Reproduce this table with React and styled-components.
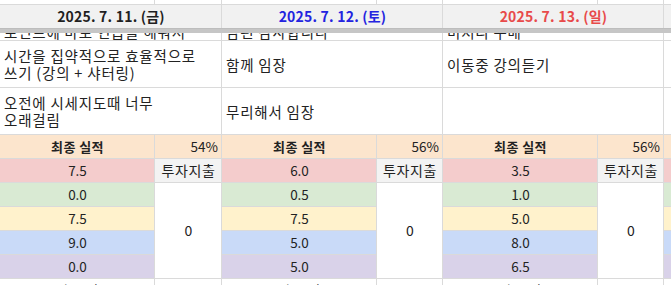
import React from "react";
import styled, { createGlobalStyle } from "styled-components";

const Global = createGlobalStyle`
  html, body { margin: 0; padding: 0; background: #ffffff; }
  body {
    font-family: "Noto Sans CJK KR", "Noto Sans", sans-serif;
    color: #222222;
    overflow: hidden;
  }
`;

const Sheet = styled.div`
  width: 671px;
  height: 285px;
  overflow: hidden;
  display: flex;
  flex-direction: column;
  background: #ffffff;
`;

const Grid = styled.div`
  display: grid;
  grid-template-columns: 154px 66px 154px 65px 154px 65px 1fr;
  gap: 1px;
  background: #dadada;
  flex: none;
`;

const FreezeBar = styled.div`
  height: 5px;
  flex: none;
  background: #c6c6c6;
  border-top: 1px solid #bdbdbd;
  box-sizing: border-box;
`;

const Cell = styled.div`
  box-sizing: border-box;
  height: ${(p) => p.$h}px;
  background: ${(p) => p.$bg || "#ffffff"};
  grid-column: ${(p) => (p.$span ? `span ${p.$span}` : "auto")};
  grid-row: ${(p) => (p.$rows ? `span ${p.$rows}` : "auto")};
  display: flex;
  align-items: ${(p) => p.$valign || "center"};
  justify-content: ${(p) =>
    p.$align === "right" ? "flex-end" : p.$align === "left" ? "flex-start" : "center"};
  padding: 0 3px 0 4px;
  overflow: hidden;
  font-size: ${(p) => p.$size || 13.5}px;
  letter-spacing: ${(p) => p.$track || 0}px;
  line-height: 17px;
  font-weight: ${(p) => (p.$bold ? 700 : 400)};
  color: ${(p) => p.$color || "#222222"};
  white-space: pre-line;
  text-align: ${(p) => p.$align || "center"};
`;

const NoteCell = styled(Cell).attrs({ $span: 2, $align: "left", $size: 14.5, $track: 0.8 })``;

const ClippedText = styled.span`
  display: block;
  white-space: nowrap;
`;

const days = [
  { date: "2025. 7. 11. (금)", color: "#1f1f1f" },
  { date: "2025. 7. 12. (토)", color: "#2323e0" },
  { date: "2025. 7. 13. (일)", color: "#e84a4a" },
];

const partial = ["포인트에 바로 연습을 해줘서", "남편 감사합니다", "미처리 구매"];
const reflections = [
  ["시간을 집약적으로 효율적으로\n쓰기 (강의 + 샤터링)", "함께 임장", "이동중 강의듣기"],
  ["오전에 시세지도때 너무\n오래걸림", "무리해서 임장", ""],
];

const results = [
  { pct: "54%", total: "7.5", items: ["0.0", "7.5", "9.0", "0.0"] },
  { pct: "56%", total: "6.0", items: ["0.5", "7.5", "5.0", "5.0"] },
  { pct: "56%", total: "3.5", items: ["1.0", "5.0", "8.0", "6.5"] },
];

const itemColors = ["#d9ead3", "#fff2cc", "#c9daf8", "#d9d2e9"];
const PEACH = "#fce5cd";
const PINK = "#f4cccc";
const HEAD = "#f1f1f1";
const SPEND = "#f3f3f3";

export default function App() {
  return (
    <>
      <Global />
      <Sheet>
        <Grid>
          {Array.from({ length: 7 }).map((_, i) => (
            <Cell key={`t${i}`} $h={4} />
          ))}
          {days.map((d) => (
            <Cell key={d.date} $h={23} $span={2} $bg={HEAD} $bold $color={d.color} $size={14} $track={0.2}>
              {d.date}
            </Cell>
          ))}
          <Cell $h={23} $bg={HEAD} />
        </Grid>
        <FreezeBar />
        <Grid>
          {partial.map((t, i) => (
            <NoteCell key={`p${i}`} $h={7} $valign="flex-end">
              <ClippedText>{t}</ClippedText>
            </NoteCell>
          ))}
          <Cell $h={7} />

          {reflections.map((row, r) => (
            <React.Fragment key={`r${r}`}>
              {row.map((t, i) => (
                <NoteCell key={`r${r}-${i}`} $h={46}>
                  {t}
                </NoteCell>
              ))}
              <Cell $h={46} />
            </React.Fragment>
          ))}

          {results.map((d, i) => (
            <React.Fragment key={`h${i}`}>
              <Cell $h={23} $bg={PEACH} $bold $size={13} $track={0.4}>최종 실적</Cell>
              <Cell $h={23} $bg={PEACH} $align="right">{d.pct}</Cell>
            </React.Fragment>
          ))}
          <Cell $h={23} $bg={PEACH} />

          {results.map((d, i) => (
            <React.Fragment key={`s${i}`}>
              <Cell $h={23} $bg={PINK}>{d.total}</Cell>
              <Cell $h={23} $bg={SPEND} $size={14} $track={0.6}>투자지출</Cell>
            </React.Fragment>
          ))}
          <Cell $h={23} $bg={PINK} />

          {itemColors.map((c, r) => (
            <React.Fragment key={`i${r}`}>
              {results.map((d, i) => (
                <React.Fragment key={`i${r}-${i}`}>
                  <Cell $h={23} $bg={c}>{d.items[r]}</Cell>
                  {r === 0 && (
                    <Cell $h={95} $rows={4} $size={14}>0</Cell>
                  )}
                </React.Fragment>
              ))}
              <Cell $h={23} $bg={c} />
            </React.Fragment>
          ))}

          {results.map((d, i) => (
            <React.Fragment key={`m${i}`}>
              <Cell $h={23} $track={0.6}>투자 몰입도</Cell>
              <Cell $h={23} $align="right">0%</Cell>
            </React.Fragment>
          ))}
          <Cell $h={23} />
        </Grid>
      </Sheet>
    </>
  );
}
